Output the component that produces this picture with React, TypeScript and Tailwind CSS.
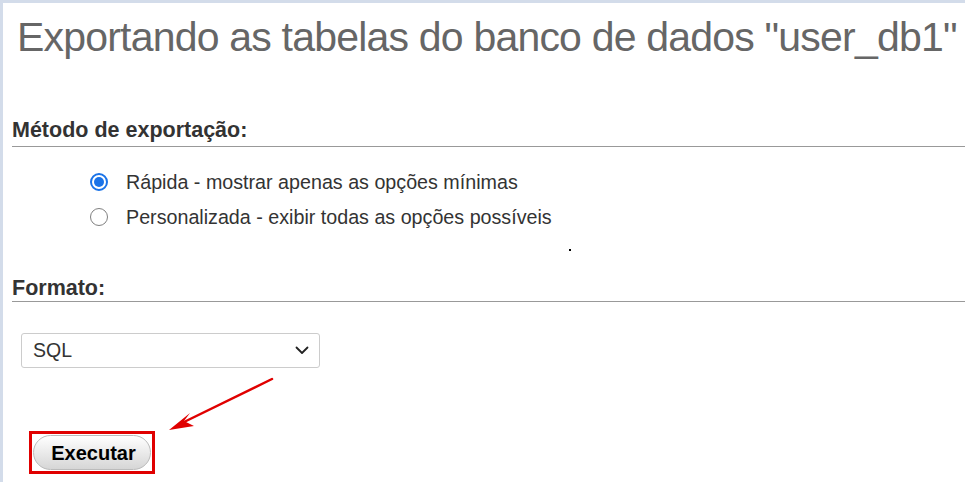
import React from 'react'

function Radio({ checked }: { checked?: boolean }) {
  return checked ? (
    <span className="flex h-[18px] w-[18px] shrink-0 items-center justify-center rounded-full border-2 border-[#1a73e8] bg-white">
      <span className="h-[10px] w-[10px] rounded-full bg-[#1a73e8]" />
    </span>
  ) : (
    <span className="h-[18px] w-[18px] shrink-0 rounded-full border border-[#808080] bg-white" />
  )
}

export default function App() {
  return (
    <div
      className="relative h-[482px] w-[965px] overflow-hidden border-l-[3px] border-t-[3px] border-[#d3dcea] bg-white text-[#333]"
      style={{ fontFamily: '"Liberation Sans", Arial, sans-serif' }}
    >
      <h2 className="ml-[14px] mt-[10px] whitespace-nowrap text-[41px] leading-[48px] font-normal tracking-[-0.8px] text-[#666]">
        Exportando as tabelas do banco de dados "user_db1"
      </h2>

      <div className="ml-[9px] mt-[57px]">
        <h3 className="border-b border-[#999] pb-[3px] text-[21.5px] font-bold leading-[25px] text-[#333]">
          Método de exportação:
        </h3>
        <div className="ml-[78px] mt-[24px] flex flex-col gap-[13px] text-[19.7px] leading-[22px] text-[#333]">
          <label className="flex items-center gap-[18px]">
            <Radio checked />
            <span>Rápida - mostrar apenas as opções mínimas</span>
          </label>
          <label className="flex items-center gap-[18px]">
            <Radio />
            <span>Personalizada - exibir todas as opções possíveis</span>
          </label>
        </div>
      </div>

      <span className="absolute left-[566px] top-[246px] h-[2px] w-[2px] bg-black" />

      <div className="ml-[9px] mt-[48px]">
        <h3 className="border-b border-[#999] text-[21.5px] font-bold leading-[25px] text-[#333]">
          Formato:
        </h3>
        <div className="ml-[9px] mt-[31px] flex h-[35px] w-[299px] items-center justify-between rounded-[3px] border border-[#ccc] bg-white pl-[11px] pr-[10px] text-[19.5px] text-[#333]">
          <span>SQL</span>
          <svg width="14" height="9" viewBox="0 0 14 9" fill="none">
            <path d="M1.5 1.5 L7 7 L12.5 1.5" stroke="#222" strokeWidth="1.8" strokeLinecap="round" strokeLinejoin="round" />
          </svg>
        </div>
        <div className="ml-[17px] mt-[63px] inline-flex border-[3px] border-[#e00000] p-[1px]">
          <button className="h-[35px] w-[118px] rounded-[18px] border border-[#bbb] bg-gradient-to-b from-white to-[#d6d6d6] pl-[3px] text-[20px] font-bold text-black">
            Executar
          </button>
        </div>
      </div>

      <svg className="absolute left-[157px] top-[367px]" width="120" height="70" viewBox="0 0 120 70">
        <line x1="112" y1="9" x2="22" y2="53" stroke="#e00000" strokeWidth="2.5" strokeLinecap="round" />
        <path d="M9 60 L30 43 L24 51 L34 56 Z" fill="#e00000" />
      </svg>
    </div>
  )
}
